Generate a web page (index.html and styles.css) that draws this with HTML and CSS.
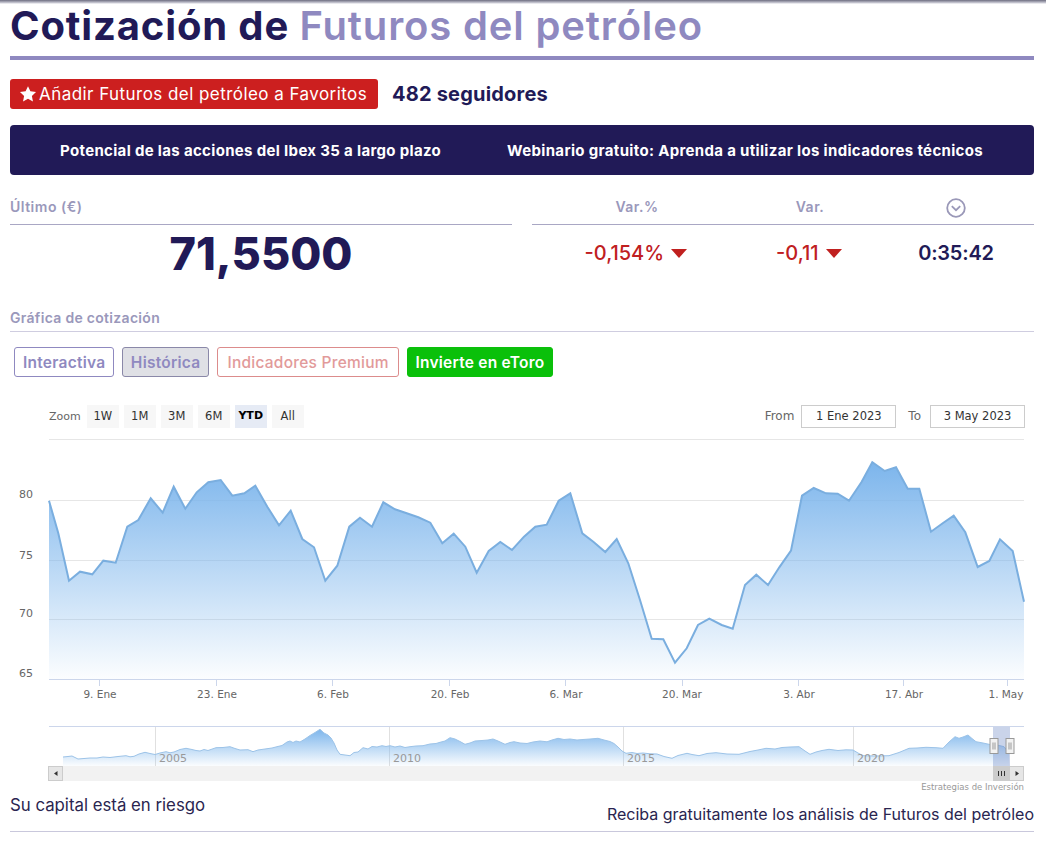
FILE: index.html
```html
<!DOCTYPE html>
<html lang="es">
  <head>
    <meta charset="UTF-8" />
    <title>Cotización de Futuros del petróleo</title>
    <link rel="stylesheet" href="styles.css">
  </head>
  <body>
    <div class="top-shadow"></div>
    <div class="page">
      <h1 class="title">Cotización de <span class="title-name">Futuros del petróleo</span></h1>

      <div class="follow">
        <button class="fav-button">
          <svg class="star" viewBox="0 0 24 24" width="18" height="18"><path d="M12 1.5l3.2 6.9 7.5.9-5.500 5.200 1.400 7.500L12 18.300l-6.600 3.700 1.400-7.500L1.300 9.300l7.500-.9z" fill="#fff"/></svg>
          Añadir Futuros del petróleo a Favoritos
        </button>
        <span class="followers">482 seguidores</span>
      </div>

      <div class="banner">
        <a>Potencial de las acciones del Ibex 35 a largo plazo</a>
        <a>Webinario gratuito: Aprenda a utilizar los indicadores técnicos</a>
      </div>

      <div class="quote">
        <div class="quote-last">
          <div class="quote-head">Último (€)</div>
          <div class="quote-price">71,5500</div>
        </div>
        <div class="quote-vars">
          <div class="quote-head quote-cols">
            <span>Var.%</span>
            <span>Var.</span>
            <span>
              <svg class="clock-toggle" viewBox="0 0 20 20" width="20" height="20"><circle cx="10" cy="10" r="8.800" fill="none" stroke="#9a98b8" stroke-width="1.800"/><path d="M5.800 8.200L10 12.200l4.200-4" fill="none" stroke="#9a98b8" stroke-width="1.800"/></svg>
            </span>
          </div>
          <div class="quote-cols quote-values">
            <span class="down">-0,154% <i class="arrow"></i></span>
            <span class="down">-0,11 <i class="arrow"></i></span>
            <span class="time">0:35:42</span>
          </div>
        </div>
      </div>

      <h2 class="section-title">Gráfica de cotización</h2>

      <div class="tabs">
        <a class="tab">Interactiva</a>
        <a class="tab tab-active">Histórica</a>
        <a class="tab tab-premium">Indicadores Premium</a>
        <a class="tab tab-etoro">Invierte en eToro</a>
      </div>

      <div class="chart">
        <div class="chart-toolbar">
          <span class="zoom-label">Zoom</span>
          <span class="range">1W</span>
          <span class="range">1M</span>
          <span class="range">3M</span>
          <span class="range">6M</span>
          <span class="range range-on">YTD</span>
          <span class="range">All</span>
          <span class="date-label date-from">From</span>
          <span class="date-box">1 Ene 2023</span>
          <span class="date-label date-to">To</span>
          <span class="date-box">3 May 2023</span>
        </div>

        <svg class="plot" viewBox="0 430 1034 365" width="1034" height="365">
          <defs>
            <linearGradient id="areaFill" gradientUnits="userSpaceOnUse" x1="0" y1="462" x2="0" y2="680">
              <stop offset="0" stop-color="#7cb5ec"/>
              <stop offset="1" stop-color="#7cb5ec" stop-opacity="0.02"/>
            </linearGradient>
            <linearGradient id="navFill" gradientUnits="userSpaceOnUse" x1="0" y1="729" x2="0" y2="766">
              <stop offset="0" stop-color="#7cb5ec"/>
              <stop offset="1" stop-color="#7cb5ec" stop-opacity="0.03"/>
            </linearGradient>
          </defs>

          <!-- rejilla -->
          <g class="grid">
            <path d="M49 439.5H1024M49 500.5H1024M49 560.5H1024M49 619.5H1024"/>
          </g>
          <g class="y-labels">
            <text x="33" y="498">80</text>
            <text x="33" y="559">75</text>
            <text x="33" y="617">70</text>
            <text x="33" y="677">65</text>
          </g>

          <path fill="url(#areaFill)" d="M49 500.7L58.3 533.3 69 580.7 80 571.7 92.3 574.3 103.3 560.7 115.7 562.7 127.3 526.7 138.3 520 150.7 498.3 162.7 512.7 173.7 486.7 185.3 508.7 196.7 492.3 208.3 482.3 220.7 480 232.3 495.7 244.3 493.3 255.3 485.7 267.3 506.7 279 525.3 290.7 510.7 302.3 539 314 547.3 325.3 580.7 337.3 565.7 349.3 526.7 360 517.7 372 526.7 383.3 502.3 395 509.3 406.7 513.3 418.3 517.3 430.3 522.7 442.3 543.3 453.7 533.7 465.3 546.7 476.7 572.7 488.7 551 500.3 542 512 550 524 536.7 535.3 526.7 546.7 524.7 558.7 500.7 570.3 493.3 582.3 533.3 593.3 541.7 605.3 552 616.7 539 628.3 563.3 640 600 651.7 638.7 663.3 639.3 675 662.7 686.7 648.3 698 625 709.3 618.7 721.7 625 732.7 628.7 745 585 756.3 574.7 768 585 779.3 567.3 791 550.7 802 495.7 813.7 488 826 493.3 837.7 493.7 849 500.7 861.7 481.7 872.3 462.3 884.7 471 896 467.3 907.7 488.7 919.3 488.7 931 531.7 942.7 523.3 953.7 515.7 965.3 532.3 977.7 567 989.3 561 1000 539.3 1012.7 551 1024 601.7V680H49Z"/>
          <path class="area-line" d="M49 500.7L58.3 533.3 69 580.7 80 571.7 92.3 574.3 103.3 560.7 115.7 562.7 127.3 526.7 138.3 520 150.7 498.3 162.7 512.7 173.7 486.7 185.3 508.7 196.7 492.3 208.3 482.3 220.7 480 232.3 495.7 244.3 493.3 255.3 485.7 267.3 506.7 279 525.3 290.7 510.7 302.3 539 314 547.3 325.3 580.7 337.3 565.7 349.3 526.7 360 517.7 372 526.7 383.3 502.3 395 509.3 406.7 513.3 418.3 517.3 430.3 522.7 442.3 543.3 453.7 533.7 465.3 546.7 476.7 572.7 488.7 551 500.3 542 512 550 524 536.7 535.3 526.7 546.7 524.7 558.7 500.7 570.3 493.3 582.3 533.3 593.3 541.7 605.3 552 616.7 539 628.3 563.3 640 600 651.7 638.7 663.3 639.3 675 662.7 686.7 648.3 698 625 709.3 618.7 721.7 625 732.7 628.7 745 585 756.3 574.7 768 585 779.3 567.3 791 550.7 802 495.7 813.7 488 826 493.3 837.7 493.7 849 500.7 861.7 481.7 872.3 462.3 884.7 471 896 467.3 907.7 488.7 919.3 488.7 931 531.7 942.7 523.3 953.7 515.7 965.3 532.3 977.7 567 989.3 561 1000 539.3 1012.7 551 1024 601.7"/>

          <!-- eje X -->
          <path class="axis" d="M49 679.5H1024M99.5 680v6M216.5 680v6M332.5 680v6M449.5 680v6M565.5 680v6M682.5 680v6M798.5 680v6M903.5 680v6M1007.5 680v6"/>
          <g class="x-labels">
            <text x="100" y="698">9. Ene</text>
            <text x="217" y="698">23. Ene</text>
            <text x="333" y="698">6. Feb</text>
            <text x="450" y="698">20. Feb</text>
            <text x="566" y="698">6. Mar</text>
            <text x="682" y="698">20. Mar</text>
            <text x="799" y="698">3. Abr</text>
            <text x="904" y="698">17. Abr</text>
            <text x="1006" y="698">1. May</text>
          </g>

          <!-- navegador -->
          <path class="axis" d="M49 726.5H1024"/>
          <path class="nav-ticks" d="M155.5 727V766M389.5 727V766M623.5 727V766M853.5 727V766"/>
          <path fill="url(#navFill)" d="M63 757L68 756.5 72 756 75 757.5 78 759 84 758.500 90 758 97 758 103 757 110 757.500 118 756.500 126 755.700 130 756.800 134 756.300 139 754 145 752.300 150 753.500 155 754.500 160 753 166 751.700 170 752.800 174 752 180 749.500 186 748.300 192 749.500 196 750.500 200 751 204 749.500 208 750.500 216 747.700 223 747.500 230 746.700 235 748.500 240 750 248 749.700 253 751.700 258 750 265 749 272 748 277 746.700 282 745.500 287 742 290 741 293 742.500 296 741 300 742 305 739 310 735.500 315 732.500 320 729.300 324 733 328 735 331 738 334 743 337 750 340 754.300 345 755 350 755.700 354 752.500 358 752 363 747.700 368 749 372 746.500 377 747 382 745.700 386 746.500 390 745.700 395 747 400 746 405 747.500 410 746.700 416 746 423 745.700 430 744 436 743.500 440 742.300 445 741 450 737.700 455 739 460 741.500 465 744.300 470 743 475 741 482 740.500 488 740 493 739 498 741 505 744.300 510 742.500 514 741.700 520 743 527 743.500 533 742 540 741 547 741.800 552 740 558 738.300 564 739.500 570 739 577 740 583 739.500 590 739 598 738.300 604 740 610 741.500 614 743.500 618 747 622 751 626 753.300 632 752.500 637 753.500 643 753 650 753.800 657 754 664 756.500 672 758.300 678 755.500 687 753.300 692 754.500 699 755.700 707 753.500 716 752.700 727 754 739 754.300 750 751.500 758 750 766 748.300 775 749 782 747.500 790 747 799 746.700 805 751 810 754.300 816 752 822 750.500 829 749.300 838 750.500 846 749.800 853 750 858 753 863 755.700 875 756 889 755.700 899 752.500 909 748.300 917 748 926 747.300 936 747.700 943 748.300 949 742 955 736.700 959 738.300 963 737 968 735 972 738.500 976 741.700 983 743 989 744.300 995 745 1000 745.700 1004 746.700 1009 753V766H63Z"/>
          <path class="nav-line" d="M63 757L68 756.5 72 756 75 757.5 78 759 84 758.500 90 758 97 758 103 757 110 757.500 118 756.500 126 755.700 130 756.800 134 756.300 139 754 145 752.300 150 753.500 155 754.500 160 753 166 751.700 170 752.800 174 752 180 749.500 186 748.300 192 749.500 196 750.500 200 751 204 749.500 208 750.500 216 747.700 223 747.500 230 746.700 235 748.500 240 750 248 749.700 253 751.700 258 750 265 749 272 748 277 746.700 282 745.500 287 742 290 741 293 742.500 296 741 300 742 305 739 310 735.500 315 732.500 320 729.300 324 733 328 735 331 738 334 743 337 750 340 754.300 345 755 350 755.700 354 752.500 358 752 363 747.700 368 749 372 746.500 377 747 382 745.700 386 746.500 390 745.700 395 747 400 746 405 747.500 410 746.700 416 746 423 745.700 430 744 436 743.500 440 742.300 445 741 450 737.700 455 739 460 741.500 465 744.300 470 743 475 741 482 740.500 488 740 493 739 498 741 505 744.300 510 742.500 514 741.700 520 743 527 743.500 533 742 540 741 547 741.800 552 740 558 738.300 564 739.500 570 739 577 740 583 739.500 590 739 598 738.300 604 740 610 741.500 614 743.500 618 747 622 751 626 753.300 632 752.500 637 753.500 643 753 650 753.800 657 754 664 756.500 672 758.300 678 755.500 687 753.300 692 754.500 699 755.700 707 753.500 716 752.700 727 754 739 754.300 750 751.500 758 750 766 748.300 775 749 782 747.500 790 747 799 746.700 805 751 810 754.300 816 752 822 750.500 829 749.300 838 750.500 846 749.800 853 750 858 753 863 755.700 875 756 889 755.700 899 752.500 909 748.300 917 748 926 747.300 936 747.700 943 748.300 949 742 955 736.700 959 738.300 963 737 968 735 972 738.500 976 741.700 983 743 989 744.300 995 745 1000 745.700 1004 746.700 1009 753"/>
          <g class="nav-labels">
            <text x="159" y="762">2005</text>
            <text x="393" y="762">2010</text>
            <text x="627" y="762">2015</text>
            <text x="857" y="762">2020</text>
          </g>
          <rect class="nav-mask" x="993" y="727" width="17" height="39"/>

          <!-- barra de desplazamiento -->
          <rect class="scroll-track" x="48" y="766" width="976" height="15"/>
          <rect class="scroll-btn" x="48.5" y="766.5" width="14" height="14"/>
          <rect class="scroll-btn" x="1009.5" y="766.5" width="14" height="14"/>
          <path class="scroll-arrow" d="M57.5 771v5l-3.5-2.500zM1015.5 771v5l3.500-2.500z"/>
          <rect class="scroll-thumb" x="993" y="766" width="16" height="15"/>
          <path class="scroll-grip" d="M998.500 771v5M1001.500 771v5M1004.500 771v5"/>

          <g class="nav-handle">
            <rect x="990" y="738.500" width="8" height="15"/>
            <rect x="1006" y="738.500" width="8" height="15"/>
            <path d="M993 742.500v7M995 742.500v7M1009 742.500v7M1011 742.500v7"/>
          </g>

          <text class="credit" x="1024" y="790">Estrategias de Inversión</text>
        </svg>
      </div>

      <div class="footer-row">
        <span class="risk">Su capital está en riesgo</span>
        <span class="signup">Reciba gratuitamente los análisis de Futuros del petróleo</span>
      </div>
    </div>
  </body>
</html>
```

FILE: styles.css
```css
body {
  margin: 0;
  background-color: #fff;
  color: #211a57;
  font-family: Inter, "Liberation Sans", sans-serif;
}

/* sombra de la cabecera fija */
.top-shadow {
  height: 4px;
  background: linear-gradient(#6d6d80, #c9c9d4 70%, #fff);
}

.page {
  padding: 0 12px 0 10px;
}

.title {
  margin: 0;
  height: 52px;
  border-bottom: 4px solid #8f89c0;
  font-size: 40px;
  line-height: 44px;
  font-weight: 700;
  letter-spacing: 0.85px;
  white-space: nowrap;
}

.title-name {
  color: #8f89c0;
  font-weight: 600;
}

.follow {
  display: flex;
  align-items: center;
  margin-top: 19px;
}

.fav-button {
  display: flex;
  align-items: center;
  gap: 2px;
  width: 368px;
  height: 30px;
  padding: 0 0 0 9px;
  border: none;
  border-radius: 3px;
  background-color: #cc1f1f;
  color: #fff;
  font-family: inherit;
  font-size: 17px;
  letter-spacing: 0.45px;
  white-space: nowrap;
}

.followers {
  margin-left: 14px;
  font-size: 20px;
  font-weight: 700;
  letter-spacing: 0.2px;
}

.banner {
  display: flex;
  align-items: center;
  height: 50px;
  margin-top: 16px;
  padding-left: 50px;
  gap: 66px;
  border-radius: 4px;
  background-color: #211a57;
  color: #fff;
  font-size: 15px;
  font-weight: 700;
  letter-spacing: 0.33px;
  white-space: nowrap;
}

.quote {
  display: flex;
  gap: 20px;
  margin-top: 21px;
}

.quote-last,
.quote-vars {
  flex: 1;
}

.quote-head {
  height: 28px;
  line-height: 22px;
  border-bottom: 1px solid #a9a7c4;
  color: #9a98bb;
  font-size: 14px;
  font-weight: 600;
  letter-spacing: 0.5px;
}

.quote-price {
  margin-top: 1px;
  text-align: center;
  font-size: 45px;
  line-height: 56px;
  font-weight: 800;
}

.quote-cols {
  display: grid;
  grid-template-columns: 186px 160px 1fr;
  padding: 0 12px;
  text-align: center;
}

.clock-toggle {
  vertical-align: top;
  margin-top: 2px;
}

.quote-values {
  margin-top: 14px;
  font-size: 20px;
  line-height: 28px;
  font-weight: 500;
}

.down {
  color: #c0201f;
}

.time {
  font-weight: 600;
  letter-spacing: -0.2px;
}

.arrow {
  display: inline-block;
  width: 0;
  height: 0;
  margin: 0 2px;
  vertical-align: 2px;
  border-left: 8px solid transparent;
  border-right: 8px solid transparent;
  border-top: 9px solid #c0201f;
}

.section-title {
  margin: 22px 0 0;
  height: 27px;
  line-height: 28px;
  border-bottom: 1px solid #cfcde0;
  color: #9a98bb;
  font-size: 14px;
  font-weight: 600;
  letter-spacing: 0.3px;
}

.tabs {
  display: flex;
  gap: 8px;
  margin: 15px 0 0 4px;
}

.tab {
  box-sizing: border-box;
  height: 30px;
  line-height: 29px;
  padding: 0 8px;
  border: 1px solid #8f89c0;
  border-radius: 3px;
  color: #8f89c0;
  font-size: 15.5px;
  font-weight: 600;
  letter-spacing: 0.25px;
  white-space: nowrap;
}

.tab-active {
  padding: 0 7.5px;
  border-color: #8a88a8;
  background-color: #dfe0e5;
}

.tab-premium {
  padding: 0 9.5px;
  border-color: #dc8c8c;
  color: #e29a9a;
  font-weight: 500;
}

.tab-etoro {
  padding: 0 7px;
  border-color: #0ac00a;
  background-color: #0ac00a;
  color: #fff;
}

.chart {
  font-family: "DejaVu Sans", sans-serif;
}

.chart-toolbar {
  display: flex;
  align-items: center;
  height: 24px;
  margin-top: 27px;
  padding-left: 39px;
  color: #666;
  font-size: 11px;
}

.zoom-label {
  margin-right: 6px;
}

.range {
  width: 32px;
  height: 23px;
  line-height: 22px;
  margin-right: 5px;
  background-color: #f7f7f7;
  color: #333;
  text-align: center;
  font-size: 11.5px;
}

.range-on {
  background-color: #e6ebf5;
  color: #000;
  font-weight: 700;
  font-size: 11px;
}

.date-label {
  color: #666;
  font-size: 12px;
}

.date-from {
  margin-left: auto;
  margin-right: 7px;
}

.date-to {
  margin-left: 12px;
  margin-right: 9px;
}

.date-box {
  box-sizing: border-box;
  width: 95px;
  height: 23px;
  line-height: 20px;
  border: 1px solid #ccc;
  color: #333;
  text-align: center;
  font-size: 11.5px;
}

.date-box:last-child {
  margin-right: 9px;
}

.plot {
  display: block;
  margin: 2px 0 0 -10px;
}

.grid {
  fill: none;
  stroke: #e6e6e6;
  stroke-width: 1;
}

.y-labels text {
  fill: #666;
  font-size: 11px;
  text-anchor: end;
}

.x-labels text {
  fill: #666;
  font-size: 10.5px;
  text-anchor: middle;
}

.area-line {
  fill: none;
  stroke: #7aaedf;
  stroke-width: 2;
}

.axis {
  fill: none;
  stroke: #ccd6eb;
  stroke-width: 1;
}

.nav-ticks {
  fill: none;
  stroke: #e0e0e0;
}

.nav-line {
  fill: none;
  stroke: #9cc3e8;
  stroke-width: 1;
}

.nav-labels text {
  fill: #999;
  font-size: 11px;
}

.nav-mask {
  fill: rgba(102, 133, 194, 0.35);
}

.scroll-track {
  fill: #f2f2f2;
}

.scroll-btn {
  fill: #e6e6e6;
  stroke: #ccc;
}

.scroll-thumb {
  fill: #ccc;
}

.scroll-arrow {
  fill: #333;
}

.scroll-grip {
  fill: none;
  stroke: #333;
}

.nav-handle {
  fill: #f2f2f2;
  stroke: #999;
}

.credit {
  fill: #999;
  font-size: 8.5px;
  text-anchor: end;
}

.footer-row {
  display: flex;
  justify-content: space-between;
  height: 36px;
  border-bottom: 1px solid #c9c8dc;
  font-size: 16px;
  line-height: 20px;
  color: #2a2550;
}

.risk {
  font-size: 16.8px;
}

.signup {
  margin-top: 9px;
}
```
